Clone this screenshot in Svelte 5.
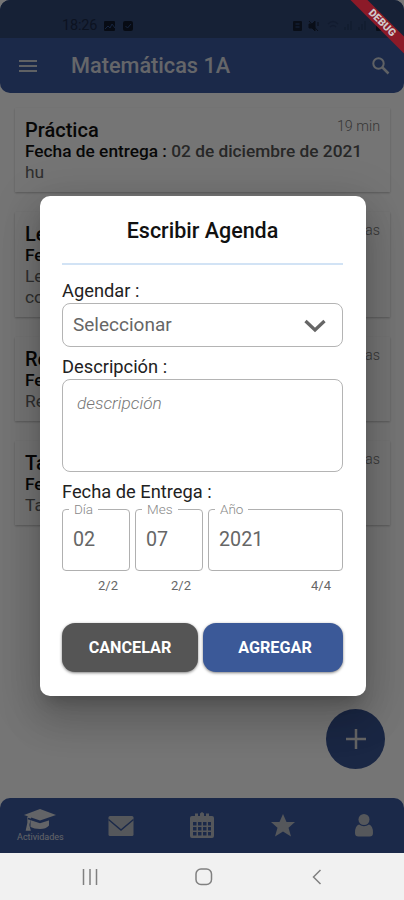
<script lang="ts">
	type Task = { title: string; age: string; due: string; body: string[] };

	const tasks: Task[] = [
		{ title: 'Práctica', age: '19 min', due: '02 de diciembre de 2021', body: ['hu'] },
		{ title: 'Lectura', age: '2 horas', due: '02 de diciembre de 2021', body: ['Leer', 'completo'] },
		{ title: 'Repaso', age: '3 horas', due: '02 de diciembre de 2021', body: ['Repaso'] },
		{ title: 'Tarea', age: '3 horas', due: '02 de diciembre de 2021', body: ['Tarea'] }
	];

	const dateFields = [
		{ label: 'Día', value: '02', count: '2/2', name: 'day' },
		{ label: 'Mes', value: '07', count: '2/2', name: 'month' },
		{ label: 'Año', value: '2021', count: '4/4', name: 'year' }
	];
</script>

<div class="phone">
	<div class="app">
		<div class="top">
			<div class="status">
				<span class="clock">18:26</span>
				<svg class="status-left" width="31" height="12" viewBox="0 0 31 12">
					<rect x="1" y="1" width="11" height="10" rx="1" />
					<path d="M2 9l3-3 2 2 2-4 3 4" fill="none" stroke="#31508b" />
					<rect x="20" y="1" width="10" height="10" rx="2" />
					<path d="M22.500 6l2 2 3.500-4" fill="none" stroke="#31508b" />
				</svg>
				<svg class="status-right" width="95" height="12" viewBox="0 0 95 12">
					<rect x="1" y="1" width="9" height="10" rx="1" />
					<path d="M3.500 4h4M3.500 7h4" stroke="#31508b" />
					<path d="M17 4h3l3-3v10l-3-3h-3zM17 1l9 10M26 2v4" stroke="#101a2c" />
					<path
						class="faint"
						d="M36 4q5-5 10 0M38 7q3-3 6 0M53 10V7M56 10V4M59 10V1M67 10V7M70 10V4M73 10V1"
					/>
					<rect x="84" y="1" width="6" height="10" rx="1" />
				</svg>
			</div>
			<header>
				<svg class="menu" width="20" height="14" viewBox="0 0 20 14">
					<path d="M1 2h18M1 7h18M1 12h18" stroke="#cfd3da" stroke-width="2.200" />
				</svg>
				<h1>Matemáticas 1A</h1>
				<svg class="search" width="20" height="20" viewBox="0 0 20 20" fill="none" stroke="#cfd3da">
					<circle cx="7.500" cy="7.500" r="5.200" stroke-width="2" />
					<path d="M11.500 11.500l6 6" stroke-width="2.500" />
				</svg>
			</header>
		</div>

		<main>
			{#each tasks as task}
				<article>
					<div class="row">
						<h2>{task.title}</h2>
						<time>{task.age}</time>
					</div>
					<p class="due"><b>Fecha de entrega :</b> {task.due}</p>
					{#each task.body as line}
						<p class="body">{line}</p>
					{/each}
				</article>
			{/each}
		</main>

		<button class="fab" aria-label="Nueva actividad">
			<svg width="22" height="22" viewBox="0 0 22 22">
				<path d="M11 1v20M1 11h20" stroke="#dcdcdc" stroke-width="2.500" />
			</svg>
		</button>

		<nav>
			<div class="tab active">
				<svg width="32" height="22" viewBox="0 0 32 22">
					<path d="M0 6L16 0l16 6-16 5.500z" />
					<path d="M6.500 10.500l9.500 3 9-3v6q-3 3.500-9 3.500t-9.500-2z" />
					<path class="tassel" d="M8 5.500L4 8v13M2.500 21l1.500-7 2 7z" />
					<path d="M4 9.500l12 4 10-3.300" fill="none" stroke="#3c5aa0" stroke-width="1.500" />
				</svg>
				<span>Actividades</span>
			</div>
			<div class="tab">
				<svg width="26" height="20" viewBox="0 0 26 20">
					<rect x=".5" width="25" height="20" rx="1.500" />
					<path d="M.5 3.500L13 14 25.500 3.500" fill="none" stroke="#3c5aa0" stroke-width="1.500" />
				</svg>
			</div>
			<div class="tab">
				<svg width="26" height="27" viewBox="0 0 26 27">
					<path
						fill-rule="evenodd"
						d="M3 4h3V1.500h3V4h2V1.500L13 0l2 1.500V4h2V1.500h3V4h3q2 0 2 2v18q0 2-2 2H3q-2 0-2-2V6q0-2 2-2zM4 10v3.500h3.500V10zM9 10v3.500h3.500V10zM14 10v3.500h3.500V10zM19 10v3.500h3V10zM4 15v3.500h3.500V15zM9 15v3.500h3.500V15zM14 15v3.500h3.500V15zM19 15v3.500h3V15zM4 20v3.500h3.500V20zM9 20v3.500h3.500V20zM14 20v3.500h3.500V20zM19 20v3.500h3V20z"
					/>
				</svg>
			</div>
			<div class="tab">
				<svg width="24" height="23" viewBox="0 0 24 23">
					<path d="M12 0l3.500 8H24l-6.500 5.700L20 22.500l-8-5-8 5 2.500-8.800L0 8h8.500z" />
				</svg>
			</div>
			<div class="tab">
				<svg width="18" height="23" viewBox="0 0 18 23">
					<circle cx="9" cy="5.500" r="5.500" />
					<path d="M4 10.500q5 3.500 10 0 4 1 4 8.500 0 3.500-3.500 3.500h-11Q0 22.500 0 19q0-7.500 4-8.500z" />
				</svg>
			</div>
		</nav>

		<div class="scrim">
			<section class="dialog" role="dialog" aria-labelledby="dialog-title">
				<h3 id="dialog-title">Escribir Agenda</h3>

				<div class="label">Agendar :</div>
				<div class="select">
					<span>Seleccionar</span>
					<svg width="24" height="16" viewBox="0 0 24 16">
						<path d="M2.500 4L12 13l9.500-9" fill="none" stroke="#666" stroke-width="3.300" />
					</svg>
				</div>

				<div class="label second">Descripción :</div>
				<div class="textarea">descripción</div>

				<div class="label third">Fecha de Entrega :</div>
				<div class="dates">
					{#each dateFields as field}
						<div class={['date', field.name]}>
							<fieldset>
								<legend>{field.label}</legend>
								<span>{field.value}</span>
							</fieldset>
							<small>{field.count}</small>
						</div>
					{/each}
				</div>

				<div class="actions">
					<button class="cancel">CANCELAR</button>
					<button class="add">AGREGAR</button>
				</div>
			</section>
		</div>

		<div class="debug">DEBUG</div>
	</div>

	<footer>
		<svg width="16" height="16" viewBox="0 0 16 16">
			<path d="M1.500 0v16M8 0v16M14.500 0v16" />
		</svg>
		<svg class="home" width="18" height="18" viewBox="0 0 18 18">
			<rect x="1" y="1" width="15.500" height="15.500" rx="5" />
		</svg>
		<svg width="10" height="16" viewBox="0 0 10 16">
			<path d="M8.500 1L1.500 8l7 7" />
		</svg>
	</footer>
</div>

<style>
	:global(body) {
		background: #f1f1f1;
	}

	.phone {
		width: 404px;
		height: 900px;
		display: flex;
		flex-direction: column;
		overflow: hidden;
		font-family: Roboto, 'Liberation Sans', sans-serif;
		color: #111;
	}

	h1,
	h2,
	h3,
	p {
		margin: 0;
		font-weight: 500;
	}

	button {
		border: 0;
		padding: 0;
		font: inherit;
	}

	.app {
		position: relative;
		height: 853px;
		display: flex;
		flex-direction: column;
		overflow: hidden;
		background: #fff;
	}

	.top {
		height: 93px;
		border-radius: 10px;
		overflow: hidden;
		background: #3c5aa0;
		flex: none;
	}

	.status {
		height: 38px;
		box-sizing: border-box;
		padding: 13px 17px 0 62px;
		display: flex;
		align-items: center;
		background: #314876;
		color: #1b2a49;
	}

	.clock {
		width: 41px;
		font-size: 14.5px;
		letter-spacing: -0.2px;
	}

	.status svg {
		fill: #101a2c;
	}

	.status-right {
		margin-left: auto;
		opacity: 0.85;
	}

	.status .faint {
		fill: none;
		stroke: #263b66;
		stroke-width: 1.5px;
	}

	header {
		display: flex;
		align-items: center;
		height: 55px;
		padding: 0 13px 0 18px;
	}

	h1 {
		margin-left: 33px;
		font-size: 21.7px;
		line-height: 26px;
		color: #dcdfe5;
	}

	.search {
		margin-left: auto;
	}

	.debug {
		position: absolute;
		top: 17px;
		left: 322px;
		width: 120px;
		height: 12px;
		transform: rotate(45deg);
		background: #8c1a28;
		color: #d0c8cb;
		font-size: 10.5px;
		line-height: 12px;
		font-weight: 900;
		text-align: center;
	}

	main {
		padding: 15px 14px 0 15px;
		display: flex;
		flex-direction: column;
		gap: 20px;
	}

	article {
		padding: 11px 10px 9px;
		box-shadow: 0 1px 2px rgba(0, 0, 0, 0.25);
	}

	.row {
		display: flex;
		justify-content: space-between;
	}

	h2 {
		font-size: 20px;
		line-height: 22px;
	}

	time {
		font-size: 14.3px;
		line-height: 15px;
		font-weight: 300;
		color: #777;
	}

	.due {
		font-size: 17.3px;
		line-height: 21px;
		color: #555;
		white-space: nowrap;
	}

	.due b {
		font-weight: 500;
		color: #111;
	}

	.body {
		font-size: 17.4px;
		line-height: 21px;
		font-weight: 400;
		color: #666;
	}

	.fab {
		position: absolute;
		left: 326px;
		top: 709px;
		width: 59px;
		height: 60px;
		display: grid;
		place-items: center;
		border-radius: 50%;
		background: #3a5595;
	}

	nav {
		height: 55px;
		margin-top: auto;
		display: flex;
		border-radius: 10px 10px 0 0;
		background: #3c5aa0;
	}

	.tab {
		flex: 1;
		display: flex;
		flex-direction: column;
		align-items: center;
		justify-content: center;
	}

	.tab svg {
		fill: #b9bec6;
	}

	.tab.active svg {
		fill: #d8dbe0;
	}

	.tab .tassel {
		stroke: #d8dbe0;
		stroke-width: 1.3px;
	}

	.tab span {
		font-size: 9px;
		line-height: 12px;
		color: #d8dbe0;
	}

	.scrim {
		position: absolute;
		inset: 0;
		background: rgba(0, 0, 0, 0.54);
		display: flex;
		justify-content: center;
		align-items: flex-start;
	}

	.dialog {
		margin-top: 196px;
		margin-left: 2px;
		width: 326px;
		height: 500px;
		box-sizing: border-box;
		padding: 0 23px 0 22px;
		border-radius: 10px;
		background: #fff;
		box-shadow:
			0 11px 15px -7px rgba(0, 0, 0, 0.2),
			0 24px 38px 3px rgba(0, 0, 0, 0.14),
			0 9px 46px 8px rgba(0, 0, 0, 0.12);
	}

	h3 {
		height: 67px;
		line-height: 70px;
		font-size: 21.5px;
		text-align: center;
		border-bottom: 2px solid #d2e3f5;
	}

	.label {
		margin-top: 15px;
		font-size: 18.3px;
		line-height: 22px;
		color: #222;
	}

	.select {
		margin-top: 1px;
		height: 44px;
		box-sizing: border-box;
		padding: 0 15px 2px 10px;
		display: flex;
		align-items: center;
		justify-content: space-between;
		border: 1px solid #b4b4b4;
		border-radius: 8px;
		font-size: 19px;
		color: #666;
	}

	.select svg {
		margin-top: 2px;
	}

	.label.second {
		margin-top: 9px;
	}

	.textarea {
		margin-top: 1px;
		height: 93px;
		box-sizing: border-box;
		padding: 12px 14px;
		border: 1px solid #b4b4b4;
		border-radius: 8px;
		font-size: 17.3px;
		line-height: 22px;
		font-style: italic;
		font-weight: 300;
		color: #777;
	}

	.label.third {
		margin-top: 9px;
	}

	.dates {
		margin-top: -1px;
		display: flex;
		gap: 5px;
	}

	.date {
		width: 68px;
	}

	.date.year {
		width: 135px;
	}

	fieldset {
		height: 69px;
		box-sizing: border-box;
		margin: 0;
		min-width: 0;
		padding: 0 6px;
		border: 1px solid #b0b0b0;
		border-radius: 4px;
	}

	legend {
		position: relative;
		padding: 0 5px;
		font-size: 13.5px;
		line-height: 14px;
		color: #888;
		font-weight: 300;
	}

	fieldset span {
		display: block;
		padding: 11px 4px 0;
		font-size: 19.7px;
		line-height: 26px;
		color: #666;
	}

	small {
		display: block;
		margin-top: 7px;
		padding-right: 12px;
		text-align: right;
		font-size: 13px;
		line-height: 15px;
		color: #666;
	}

	.actions {
		margin-top: 30px;
		display: flex;
		gap: 5px;
	}

	.actions button {
		flex: 1;
		height: 49px;
		border-radius: 13px;
		color: #fff;
		font-size: 16.2px;
		font-weight: 700;
		box-shadow: 0 1px 3px rgba(0, 0, 0, 0.5);
	}

	.actions .cancel {
		background: #555;
	}

	.actions .add {
		background: #3b5998;
		padding-left: 4px;
	}

	footer {
		flex: 1;
		display: flex;
		align-items: center;
		padding: 0 82px;
		justify-content: space-between;
		background: #f1f1f1;
	}

	footer svg {
		fill: none;
		stroke: #808080;
		stroke-width: 1.5px;
	}

	footer .home {
		margin-right: 2px;
	}
</style>
